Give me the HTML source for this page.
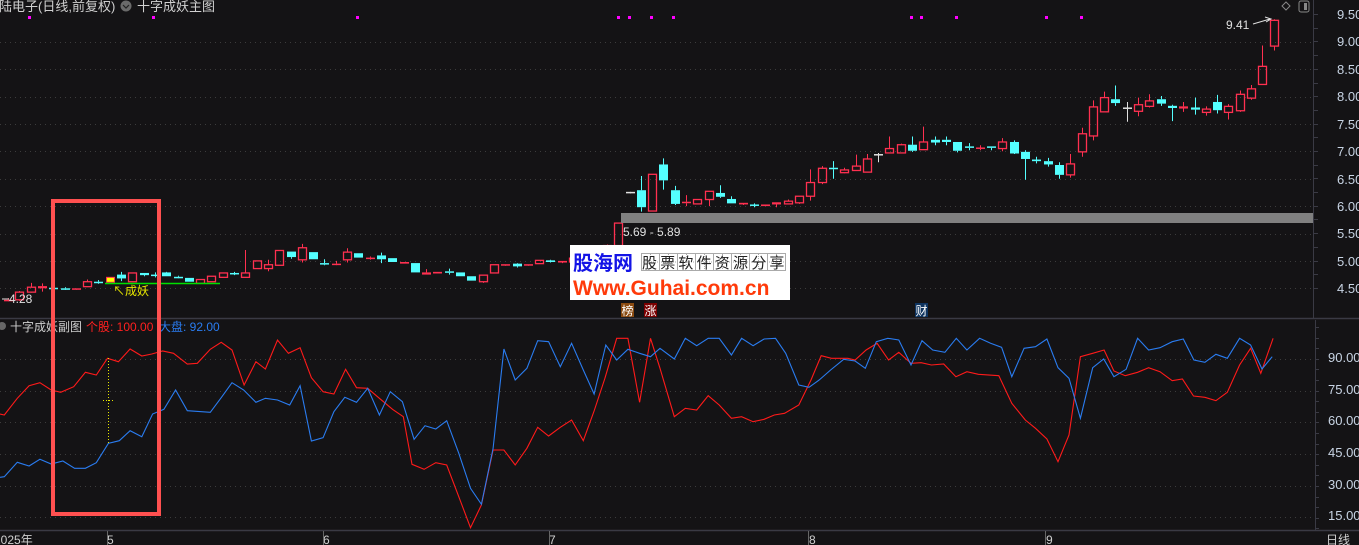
<!DOCTYPE html>
<html><head><meta charset="utf-8"><style>
html,body{margin:0;padding:0;background:#141315;width:1359px;height:545px;overflow:hidden}
svg{display:block}
text{font-family:"Liberation Sans","Noto Sans CJK SC",sans-serif}
</style></head><body>
<svg id="s" width="1359" height="545" xmlns="http://www.w3.org/2000/svg">
<rect width="1359" height="545" fill="#141315"/>
<g id="grid" stroke="#3c3c3c" stroke-width="1" stroke-dasharray="1,4"></g>
<g id="cand"></g>
<rect x="621" y="213" width="692" height="10" fill="#808080"/>
<text x="623" y="236" font-size="12" fill="#e0e0e0">5.69 - 5.89</text>
<line x1="1313.5" y1="0" x2="1313.5" y2="318" stroke="#3a3a44"/>
<line x1="0" y1="318.5" x2="1359" y2="318.5" stroke="#3a3a44" stroke-width="1.5"/>
<line x1="1315.5" y1="320" x2="1315.5" y2="530" stroke="#3a3a44"/>
<line x1="0" y1="530.5" x2="1359" y2="530.5" stroke="#3a3a44" stroke-width="1.5"/>
<g id="ticks" stroke="#3a3a44"></g>
<g font-size="13" fill="#c8d4e4">
<text x="1337" y="19">9.50</text><text x="1337" y="46">9.00</text><text x="1337" y="74">8.50</text>
<text x="1337" y="101">8.00</text><text x="1337" y="129">7.50</text><text x="1337" y="156">7.00</text>
<text x="1337" y="184">6.50</text><text x="1337" y="211">6.00</text><text x="1337" y="238">5.50</text>
<text x="1337" y="266">5.00</text><text x="1337" y="293">4.50</text>
<text x="1328" y="362">90.00</text><text x="1328" y="394">75.00</text><text x="1328" y="425">60.00</text>
<text x="1328" y="457">45.00</text><text x="1328" y="489">30.00</text><text x="1328" y="520">15.00</text>
</g>
<text x="-14" y="11" font-size="13" fill="#d0d0d0">科陆电子(日线,前复权)</text>
<circle cx="126" cy="6" r="5.5" fill="#6a6a6a"/><path d="M123 5 L126 8 L129 5" stroke="#222" stroke-width="1.2" fill="none"/>
<text x="137" y="11" font-size="13" fill="#d0d0d0">十字成妖主图</text>
<path d="M1286 2 L1290 6 L1286 10 L1282 6Z" stroke="#888" fill="none"/>
<rect x="1299" y="1" width="10" height="11" rx="2" stroke="#888" fill="none"/><rect x="1304" y="3" width="3" height="7" fill="#888"/>
<g id="dots" fill="#ff00ff"></g>
<text x="1226" y="29" font-size="12" fill="#e0e0e0">9.41</text>
<path d="M1253 24 L1270 19 M1265 17 L1271 19 L1266 22" stroke="#e0e0e0" fill="none"/>
<text x="9" y="303" font-size="12" fill="#e0e0e0">4.28</text>
<line x1="2" y1="299" x2="9" y2="299" stroke="#e0e0e0"/>
<line x1="105" y1="283.5" x2="220" y2="283.5" stroke="#00e000" stroke-width="1.5"/>
<text x="113" y="295" font-size="12" fill="#e8e800">↖成妖</text>
<circle cx="2" cy="326" r="4" fill="#666"/>
<text x="10" y="331" font-size="12" fill="#d0d0d0">十字成妖副图</text>
<text x="86" y="331" font-size="12" fill="#ff2020">个股: 100.00</text>
<text x="159" y="331" font-size="12" fill="#2a7cf0">大盘: 92.00</text>
<polyline id="red" fill="none" stroke="#ff1a1a" stroke-width="1.1"/>
<polyline id="blue" fill="none" stroke="#2a7cf0" stroke-width="1.1"/>
<line x1="108.5" y1="358" x2="108.5" y2="443" stroke="#e8e800" stroke-dasharray="1,2"/>
<line x1="103" y1="400.5" x2="114" y2="400.5" stroke="#e8e800" stroke-dasharray="1,2"/>
<rect x="53" y="201" width="106" height="313" fill="none" stroke="#ff5050" stroke-width="4"/>
<rect x="570" y="245" width="220" height="55" fill="#fff"/>
<text x="573" y="270" font-size="20" font-weight="bold" fill="#1414e6">股海网</text>
<g id="cells" stroke="#aaa" fill="none"></g>
<text x="642" y="268" font-size="15" fill="#222" letter-spacing="3.2" font-family="'Noto Serif CJK SC',serif">股票软件资源分享</text>
<text x="573" y="295" font-size="21" font-weight="bold" fill="#ff3a0a">Www.Guhai.com.cn</text>
<rect x="621" y="303" width="13" height="14" fill="#8a4a10"/><text x="621.5" y="315" font-size="12" fill="#fff">榜</text>
<rect x="644" y="303" width="13" height="14" fill="#7a0000"/><text x="644.5" y="315" font-size="12" fill="#fff">涨</text>
<rect x="915" y="303" width="13" height="14" fill="#0e3460"/><text x="915.5" y="315" font-size="12" fill="#fff">财</text>
<g font-size="12" fill="#d0d0d0">
<text x="-6" y="544">2025年</text><text x="107" y="544">5</text><text x="323" y="544">6</text>
<text x="549" y="544">7</text><text x="809" y="544">8</text><text x="1046" y="544">9</text>
<text x="1326" y="544">日线</text></g>
<g stroke="#666"><line x1="107.5" y1="531" x2="107.5" y2="545"/><line x1="323.5" y1="531" x2="323.5" y2="545"/><line x1="549.5" y1="531" x2="549.5" y2="545"/><line x1="808.5" y1="531" x2="808.5" y2="545"/><line x1="1045.5" y1="531" x2="1045.5" y2="545"/></g>
</svg>
<script>
var NS="http://www.w3.org/2000/svg";
function el(p,t,a){var e=document.createElementNS(NS,t);for(var k in a)e.setAttribute(k,a[k]);p.appendChild(e);return e;}
var g=document.getElementById('grid');
[41.7,69.1,96.5,123.9,151.3,178.7,206.1,233.5,260.9,288.3,359,391,422,454,486,517].forEach(function(y){el(g,'line',{x1:0,y1:Math.round(y)+.5,x2:1313,y2:Math.round(y)+.5});});
var tk=document.getElementById('ticks');
for(var y=14;y<300;y+=13.7)el(tk,'line',{x1:1313,y1:Math.round(y)+.5,x2:1318,y2:Math.round(y)+.5});
for(var y=327;y<530;y+=10.6)el(tk,'line',{x1:1315,y1:Math.round(y)+.5,x2:1319,y2:Math.round(y)+.5});
var d=document.getElementById('dots');
[28,152,356,617,628,650,672,910,920,955,1045,1080].forEach(function(x){el(d,'rect',{x:x,y:16,width:3,height:3});});
var C=[['R',4.29,4.28,4.32,4.27],['r',4.43,4.29,4.45,4.27],['r',4.52,4.43,4.6,4.42],['r',4.54,4.5,4.59,4.44],['c',4.51,4.5,4.53,4.48],['c',4.5,4.49,4.52,4.47],['R',4.5,4.48,4.5,4.48],['r',4.62,4.53,4.66,4.53],['c',4.62,4.61,4.65,4.58],['y',4.7,4.61,4.7,4.61],['c',4.75,4.68,4.8,4.63],['r',4.78,4.62,4.78,4.62],['c',4.78,4.74,4.78,4.72],['c',4.75,4.74,4.79,4.7],['c',4.79,4.72,4.8,4.72],['c',4.71,4.7,4.73,4.68],['c',4.69,4.62,4.69,4.62],['r',4.66,4.59,4.67,4.58],['r',4.72,4.62,4.72,4.62],['r',4.78,4.7,4.78,4.7],['c',4.78,4.77,4.8,4.74],['r',4.78,4.7,5.2,4.7],['r',5.0,4.86,5.0,4.86],['r',4.93,4.86,5.02,4.81],['r',5.19,4.92,5.19,4.92],['c',5.17,5.07,5.17,5.04],['r',5.24,5.02,5.31,4.97],['c',5.16,5.03,5.16,5.03],['c',4.96,4.95,5.03,4.92],['R',4.95,4.94,5.0,4.94],['r',5.16,5.02,5.23,4.97],['c',5.14,5.06,5.14,5.06],['R',5.06,5.04,5.08,5.02],['c',5.1,5.03,5.15,4.96],['c',5.05,4.98,5.05,4.98],['R',4.98,4.95,4.98,4.95],['c',4.96,4.79,4.96,4.79],['r',4.79,4.75,4.85,4.75],['R',4.8,4.77,4.8,4.77],['c',4.81,4.8,4.86,4.75],['c',4.79,4.72,4.79,4.72],['c',4.72,4.64,4.72,4.64],['r',4.74,4.62,4.74,4.6],['r',4.93,4.78,4.93,4.78],['R',4.94,4.92,4.94,4.92],['c',4.95,4.9,4.96,4.88],['R',4.94,4.92,4.94,4.92],['r',5.01,4.95,5.01,4.95],['c',5.01,4.98,5.02,4.97],['R',5.0,4.97,5.0,4.96],['r',5.05,4.98,5.06,4.96],['r',5.12,5.04,5.14,5.02],['r',5.2,5.1,5.22,5.08],['r',5.28,5.18,5.3,5.15],['r',5.69,5.28,5.69,5.26],['w',6.26,6.26,6.26,6.26],['c',6.29,5.98,6.55,5.9],['r',6.58,5.91,6.58,5.91],['c',6.76,6.47,6.87,6.3],['c',6.29,6.04,6.37,6.02],['R',6.08,6.07,6.2,6.0],['r',6.12,6.04,6.12,6.04],['r',6.27,6.12,6.27,6.0],['c',6.24,6.17,6.38,6.15],['c',6.13,6.05,6.18,6.05],['R',6.06,6.03,6.06,6.02],['c',6.03,6.02,6.05,5.98],['r',6.03,6.0,6.03,6.0],['r',6.07,6.03,6.07,5.98],['r',6.09,6.04,6.12,6.03],['r',6.18,6.06,6.18,6.04],['r',6.43,6.18,6.67,6.1],['r',6.69,6.43,6.73,6.4],['c',6.7,6.69,6.82,6.5],['r',6.66,6.61,6.7,6.6],['r',6.73,6.65,6.94,6.65],['r',6.86,6.62,6.95,6.62],['w',6.95,6.95,6.97,6.8],['r',7.05,6.97,7.27,6.96],['r',7.12,6.97,7.14,6.97],['c',7.12,7.01,7.27,6.99],['r',7.17,7.03,7.45,7.03],['c',7.21,7.16,7.27,7.11],['c',7.21,7.17,7.27,7.11],['c',7.17,7.01,7.17,6.98],['c',7.09,7.08,7.15,7.02],['R',7.07,7.05,7.11,7.02],['c',7.09,7.08,7.09,7.02],['r',7.17,7.05,7.24,7.0],['c',7.17,6.96,7.2,6.95],['c',6.99,6.86,7.02,6.48],['c',6.85,6.82,6.9,6.78],['c',6.82,6.76,6.88,6.72],['c',6.75,6.57,6.8,6.5],['r',6.77,6.57,6.95,6.52],['r',7.32,6.99,7.43,6.9],['r',7.81,7.28,7.93,7.2],['r',7.98,7.72,8.09,7.72],['c',7.95,7.88,8.2,7.83],['w',7.8,7.8,7.9,7.54],['r',7.85,7.73,7.98,7.64],['r',7.92,7.82,8.04,7.8],['c',7.95,7.87,8.01,7.83],['c',7.83,7.79,7.85,7.55],['r',7.82,7.78,7.9,7.72],['c',7.8,7.76,7.98,7.67],['r',7.77,7.71,7.82,7.65],['c',7.9,7.75,8.03,7.69],['r',7.82,7.71,7.86,7.58],['r',8.04,7.74,8.11,7.72],['r',8.14,7.97,8.21,7.94],['r',8.55,8.22,8.93,8.22],['r',9.39,8.92,9.41,8.84]];
function Y(p){return 14.3+(9.5-p)*54.8;}
var cg=document.getElementById('cand');
C.forEach(function(c,i){
 var x=Math.round(8+i*11.3), t=c[0], col=t=='c'?'#54ffff':(t=='w'?'#e0e0e0':'#ff3050');
 var yt=Y(c[1]),yb=Y(c[2]),yh=Y(c[3]),yl=Y(c[4]);
 if(yb-yt<1.5){yb=yt+1.5;}
 el(cg,'line',{x1:x+.5,y1:yh,x2:x+.5,y2:yt,stroke:col});
 el(cg,'line',{x1:x+.5,y1:yb,x2:x+.5,y2:yl,stroke:col});
 if(t=='r'&&yb-yt>2.5) el(cg,'rect',{x:x-3.5,y:yt,width:8,height:yb-yt,fill:'none',stroke:col,'stroke-width':1.3});
 else if(t=='y') el(cg,'rect',{x:x-3.5,y:yt,width:8,height:yb-yt,fill:'#ffff00',stroke:col});
 else el(cg,'rect',{x:x-4,y:yt,width:9,height:yb-yt,fill:col});
});
var r5=[[0,297],[10,300],[40,250],[67,212],[92,203],[118,225],[140,232],[170,215],[197,172],[222,180],[248,130],[273,140],[300,102],[327,123],[350,117],[375,108],[400,115],[432,147],[455,145],[485,103],[510,82],[535,105],[563,210],[590,140],[612,162],[640,75],[665,115],[692,98],[718,188],[745,230],[770,237],[797,163],[822,218],[848,220],[875,250],[905,283],[930,305],[950,448],[978,463],[1005,443],[1030,450],[1055,535],[1085,638],[1110,570],[1137,405],[1162,405],[1188,450],[1215,400],[1240,337],[1265,363],[1292,337],[1318,315],[1345,377],[1370,288],[1395,190],[1422,70],[1448,70],[1475,262],[1500,70]];
var r6=[[0,160],[35,305],[62,280],[90,285],[118,242],[145,270],[175,310],[200,305],[228,320],[255,313],[280,300],[305,295],[340,270],[370,195],[395,122],[420,130],[460,130],[478,135],[505,105],[532,85],[560,135],[585,112],[615,145],[640,143],[665,150],[695,147],[725,185],[752,170],[780,178],[830,182],[862,265],[895,315],[920,340],[948,372],[975,440],[1002,360],[1030,125],[1060,115],[1088,105],[1112,168],[1140,182],[1170,172],[1197,158],[1225,170],[1255,197],[1280,192],[1307,243],[1335,247],[1362,257],[1390,232],[1420,150],[1447,100],[1472,175],[1502,70]];
var b5=[[0,487],[10,485],[40,442],[67,453],[92,433],[118,447],[145,438],[172,460],[197,460],[222,443],[250,385],[275,377],[300,347],[327,365],[352,297],[378,283],[405,225],[432,287],[485,292],[510,248],[535,203],[562,225],[590,262],[612,250],[640,255],[668,270],[692,212],[718,378],[745,368],[770,290],[795,247],[822,262],[848,220],[875,300],[900,230],[928,260],[955,373],[980,332],[1005,342],[1030,317],[1058,415],[1085,520],[1110,568],[1137,400],[1162,102],[1188,195],[1215,160],[1240,77],[1265,80],[1292,155],[1318,85],[1345,165],[1370,237],[1397,90],[1422,135],[1448,103],[1475,115],[1500,125]];
var b6=[[0,100],[35,132],[62,70],[90,92],[118,70],[145,70],[175,120],[200,70],[228,92],[255,72],[283,70],[308,115],[340,210],[365,217],[390,195],[418,165],[450,133],[478,138],[503,160],[530,80],[558,70],[585,75],[615,150],[642,77],[668,105],[698,112],[726,70],[752,105],[783,70],[810,85],[837,97],[862,185],[892,100],[920,95],[948,72],[975,158],[1002,190],[1030,310],[1060,158],[1087,132],[1112,185],[1142,163],[1170,70],[1197,105],[1225,98],[1255,80],[1282,72],[1308,135],[1335,142],[1362,118],[1390,130],[1420,70],[1447,90],[1475,162],[1500,125]];
function pts(a,b){var o=[];a.forEach(function(p){o.push((p[0]/2.306).toFixed(1)+','+(315+p[1]/3).toFixed(1));});
 b.forEach(function(p){o.push((660+p[0]/2.45).toFixed(1)+','+(315+p[1]/3).toFixed(1));});return o.join(' ');}
document.getElementById('red').setAttribute('points',pts(r5,r6));
document.getElementById('blue').setAttribute('points',pts(b5,b6));
var ce=document.getElementById('cells');
for(var i=0;i<8;i++){el(ce,'rect',{x:641+i*18+.5,y:253.5,width:18,height:17});el(ce,'line',{x1:641+i*18+9.5,y1:254,x2:641+i*18+9.5,y2:270,'stroke-dasharray':'1,1'});}
el(ce,'line',{x1:641,y1:262,x2:785,y2:262,'stroke-dasharray':'1,1'});
</script>
</body></html>
